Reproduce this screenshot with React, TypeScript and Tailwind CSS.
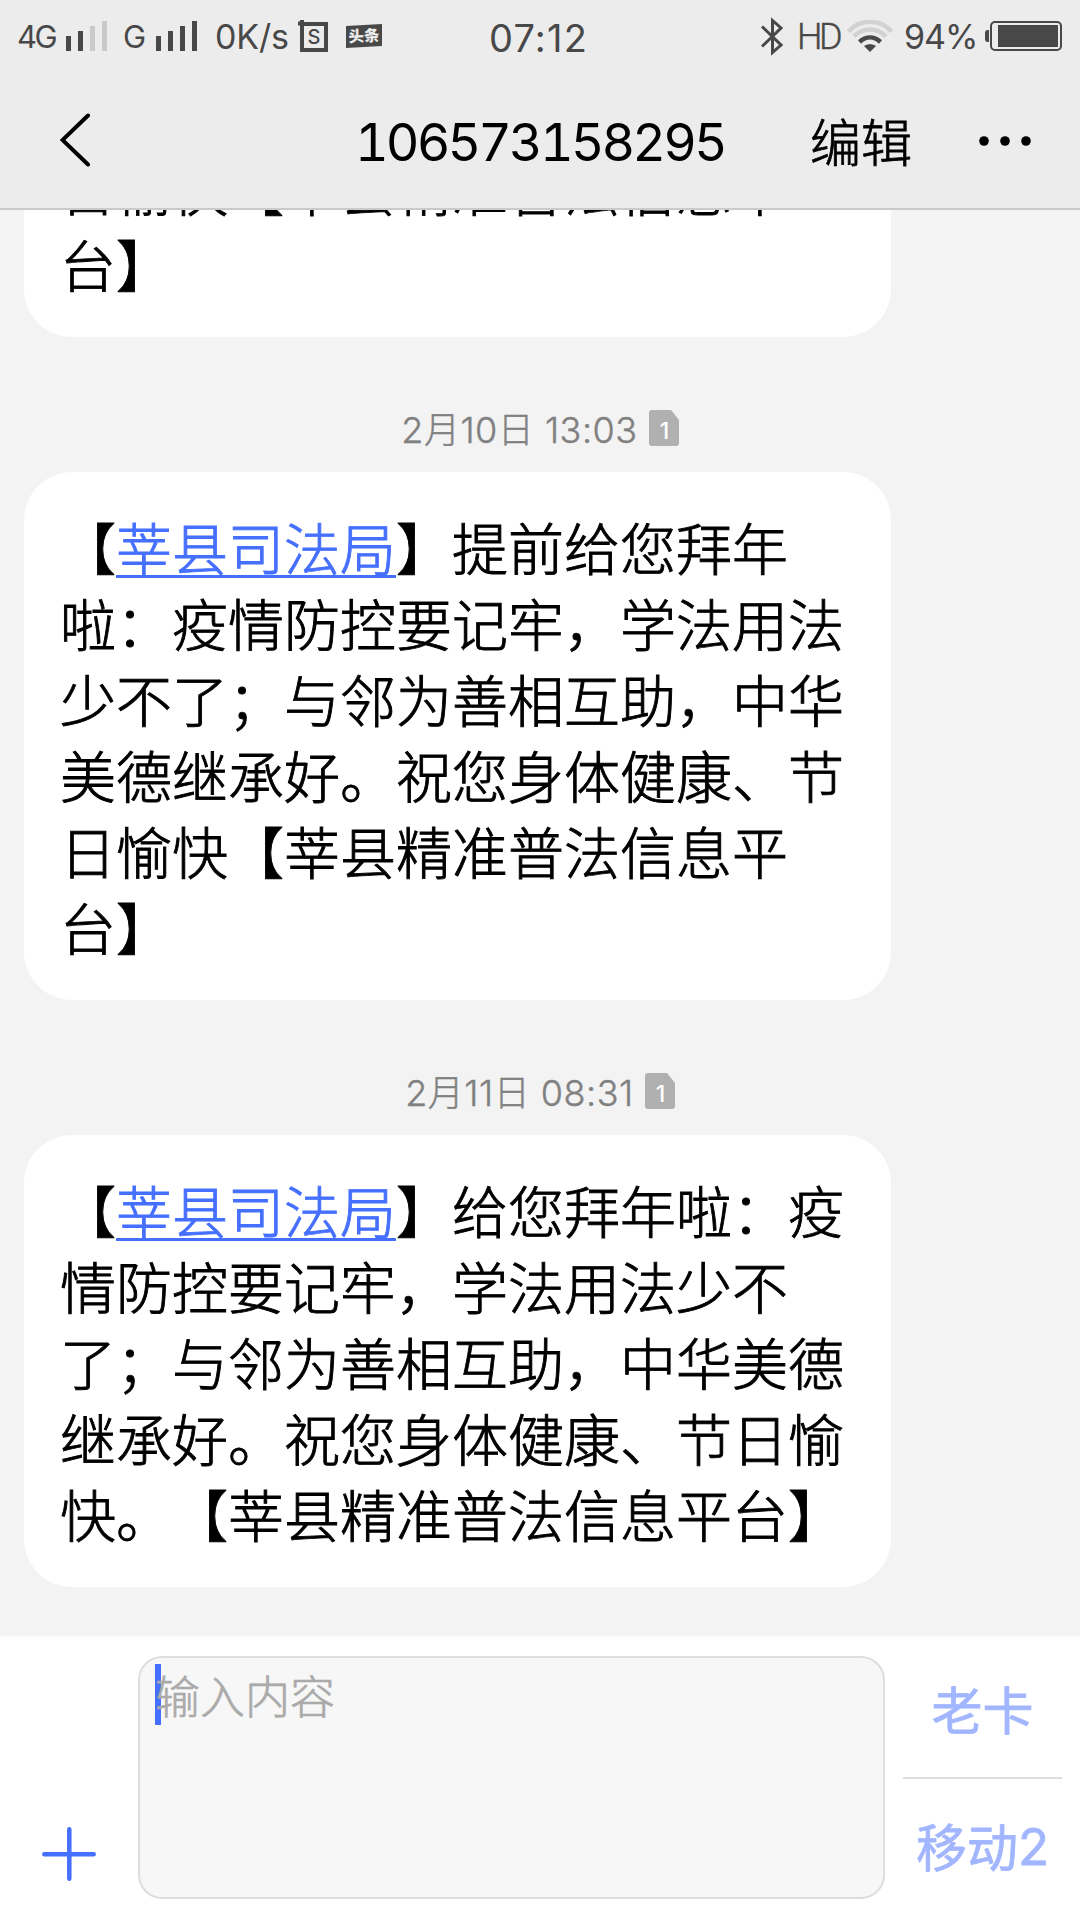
import { useState } from 'react'
import clsx from 'clsx'

interface Message {
  id: number
  date?: string
  sim?: number
  sender?: string
  lines: string[]
}

const messages: Message[] = [
  {
    id: 1,
    lines: ['日愉快【莘县精准普法信息平', '台】']
  },
  {
    id: 2,
    date: '2月10日 13:03',
    sim: 1,
    sender: '莘县司法局',
    lines: [
      '提前给您拜年',
      '啦：疫情防控要记牢，学法用法',
      '少不了；与邻为善相互助，中华',
      '美德继承好。祝您身体健康、节',
      '日愉快【莘县精准普法信息平',
      '台】'
    ]
  },
  {
    id: 3,
    date: '2月11日 08:31',
    sim: 1,
    sender: '莘县司法局',
    lines: [
      '给您拜年啦：疫',
      '情防控要记牢，学法用法少不',
      '了；与邻为善相互助，中华美德',
      '继承好。祝您身体健康、节日愉',
      '快。【莘县精准普法信息平台】'
    ]
  }
]

function SignalBars({ active }: { active: number }) {
  const heights = ['h-[15px]', 'h-5', 'h-[25px]', 'h-[30px]']
  return (
    <div className="flex h-[30px] shrink-0 items-end gap-[7px]">
      {heights.map((height, i) => (
        <span key={height} className={clsx('w-[5px]', height, i < active ? 'bg-[#484848]' : 'bg-[#cacaca]')} />
      ))}
    </div>
  )
}

function StatusBar() {
  return (
    <div className="flex h-[72px] shrink-0 items-center whitespace-nowrap pr-[18px] pl-[17px] font-['Inter'] text-[#484848]">
      <span className="w-[49px] text-[31px] leading-none tracking-[-2.5px]">4G</span>
      <SignalBars active={2} />
      <span className="ml-[16px] w-[33px] text-[31px] leading-none tracking-[-2px]">G</span>
      <SignalBars active={4} />
      <span className="ml-[18px] w-[83px] pt-0.5 text-[34px] leading-none tracking-[-0.2px]">0K/s</span>
      <svg className="h-8 w-[30px] shrink-0" viewBox="0 0 30 32" fill="none" stroke="#484848">
        <path d="M-2 3.500h8M4 0v6" strokeWidth="4" />
        <rect x="4" y="4" width="24" height="26" strokeWidth="4" />
        <text x="16" y="24" textAnchor="middle" fontSize="20" fontWeight="500" fill="#484848" strokeWidth="0">S</text>
      </svg>
      <svg className="ml-[18px] h-6 w-9 shrink-0" viewBox="0 0 36 24">
        <path d="M0 2L36 0v22L0 24z" fill="#484848" />
        <text x="18" y="17.500" textAnchor="middle" fontSize="15.500" fontWeight="900" fill="#ececec" fontFamily="Noto Sans CJK SC" transform="rotate(-3 18 12)">头条</text>
      </svg>
      <span className="ml-[107px] pt-[3px] text-[38px] leading-none tracking-[1.2px]">07:12</span>
      <div className="ml-auto flex items-center">
        <svg className="h-[39px] w-[22px]" viewBox="0 0 22 39" fill="none" stroke="#484848" strokeWidth="3">
          <path d="M1 9.500L20 28L11.500 35.500V3.500L20 11L1 29.500" />
        </svg>
        <span className="mr-[6px] ml-[14px] w-[44px] pt-px font-['Roboto'] text-[36px] leading-none font-light tracking-[-3.5px] [-webkit-text-stroke:0.4px]">HD</span>
        <svg className="h-8 w-[46px]" viewBox="0 0 46 32" fill="none" strokeWidth="4.500">
          <path d="M1.500 11.500C13-1.500 33-1.500 44.500 11.500" stroke="#d2d2d2" />
          <path d="M7 16.500C16 7 30 7 39 16.500" stroke="#d2d2d2" />
          <path d="M12.500 22C19 16 27 16 33.500 22" stroke="#484848" />
          <path d="M17 26C20.500 23.500 25.500 23.500 29 26L23 32z" fill="#484848" />
        </svg>
        <span className="ml-[11px] w-[81px] pt-0.5 text-[34px] leading-none tracking-[-1px]">94%</span>
        <svg className="h-[30px] w-[77px]" viewBox="0 0 77 30">
          <path d="M4 9H3a3 3 0 0 0-3 3v6a3 3 0 0 0 3 3h1z" fill="#484848" />
          <rect x="6" y="1" width="70" height="28" rx="4" fill="none" stroke="#484848" strokeWidth="2" />
          <rect x="13" y="4" width="60" height="22" fill="#484848" />
        </svg>
      </div>
    </div>
  )
}

function ChatHeader() {
  return (
    <div className="flex h-[136px] shrink-0 items-center text-black">
      <button className="ml-[60px]">
        <svg className="h-[54px] w-[31px]" viewBox="0 0 31 54" fill="none" stroke="currentColor" strokeWidth="4" strokeLinecap="round">
          <path d="M28 2.500L2.500 27l25.500 24.500" />
        </svg>
      </button>
      <h1 className="ml-[264px] w-[455px] pt-[5px] font-['Inter'] text-[52px] leading-none font-normal tracking-[-2.9px] tabular-nums">
        106573158295
      </h1>
      <button className="text-[51px] leading-none font-light [-webkit-text-stroke:0.8px]">编辑</button>
      <button className="ml-[67px] pt-[2px]">
        <svg className="h-[10px] w-[52px]" viewBox="0 0 52 10" fill="currentColor">
          <circle cx="5" cy="5" r="4.800" />
          <circle cx="26" cy="5" r="4.800" />
          <circle cx="47" cy="5" r="4.800" />
        </svg>
      </button>
    </div>
  )
}

function SimBadge({ slot }: { slot: number }) {
  return (
    <svg className="h-9 w-[30px]" viewBox="0 0 30 36">
      <path d="M3 0h19l8 10v23a3 3 0 0 1-3 3H3a3 3 0 0 1-3-3V3a3 3 0 0 1 3-3z" fill="#b0b0b0" />
      <text x="15.500" y="29" textAnchor="middle" fontSize="23" fontWeight="500" fontFamily="Inter" fill="#fff">{slot}</text>
    </svg>
  )
}

function MessageItem({ message }: { message: Message }) {
  const { date, sim, sender, lines } = message
  return (
    <div className="shrink-0">
      {date && (
        <div className="flex h-[135px] items-center justify-center gap-[11px] pt-[47px]">
          <span className="pt-[3px] font-['Inter','Noto_Sans_CJK_SC',sans-serif] text-[36px] leading-none font-light tracking-[0.5px] text-[#808080] [-webkit-text-stroke:0.4px]">
            {date}
          </span>
          {sim && <SimBadge slot={sim} />}
        </div>
      )}
      <div className="ml-6 w-[867px] rounded-[48px] bg-white p-9 text-[56px] leading-[76px] font-light whitespace-nowrap text-black [-webkit-text-stroke:0.9px]">
        {lines.map((line, i) => (
          <p key={line}>
            {i === 0 && sender && (
              <>
                【
                <a className="text-[#456fff] underline decoration-[3px] underline-offset-[5px] [text-decoration-skip-ink:none]">
                  {sender}
                </a>
                】
              </>
            )}
            {line}
          </p>
        ))}
      </div>
    </div>
  )
}

function Composer() {
  const [text, setText] = useState('')
  return (
    <div className="flex h-[285px] shrink-0 border-t-2 border-[#f8f8f8] bg-white">
      <button className="mt-[190px] ml-[42px] h-[54px] w-[54px]">
        <svg viewBox="0 0 54 54" fill="none" stroke="#456fff" strokeWidth="4.500" strokeLinecap="round">
          <path d="M27.300 2.300v49.400M2.300 27.300h49.400" />
        </svg>
      </button>
      <div className="relative mt-[19px] ml-[42px] h-[243px] w-[747px] rounded-[24px] border-2 border-[#dedede] bg-[#f7f7f7]">
        <span className="absolute top-[6px] left-[15px] h-[61px] w-[6px] bg-[#456fff]" />
        <textarea
          value={text}
          onChange={(e) => setText(e.target.value)}
          placeholder="输入内容"
          className="relative block h-full w-full resize-none bg-transparent px-[15px] pt-[6px] text-[45px] leading-[61px] font-light outline-none [-webkit-text-stroke:0.6px] placeholder:text-[#aaaaaa]"
        />
      </div>
      <div className="mt-[10px] ml-[18px] flex w-[159px] flex-col text-[51px] leading-none font-normal text-[#a2b6ff] [-webkit-text-stroke:0.8px]">
        <button className="flex h-[132px] items-center justify-center border-b-2 border-[#dedede] pb-[7px]">老卡</button>
        <button className="flex h-[132px] items-center justify-center">
          移动<span className="pt-0.5 font-['Inter']">2</span>
        </button>
      </div>
    </div>
  )
}

export default function App() {
  return (
    <div className="flex h-[1920px] w-[1080px] flex-col overflow-hidden bg-[#f3f3f3] font-['Noto_Sans_CJK_SC',sans-serif] [text-spacing-trim:space-all]">
      <header className="flex h-[210px] shrink-0 flex-col border-b-2 border-[#cacaca] bg-[#ececec]">
        <StatusBar />
        <ChatHeader />
      </header>
      <main className="flex min-h-0 flex-1 flex-col justify-end overflow-hidden pb-12">
        {messages.map((message) => (
          <MessageItem key={message.id} message={message} />
        ))}
      </main>
      <Composer />
    </div>
  )
}
